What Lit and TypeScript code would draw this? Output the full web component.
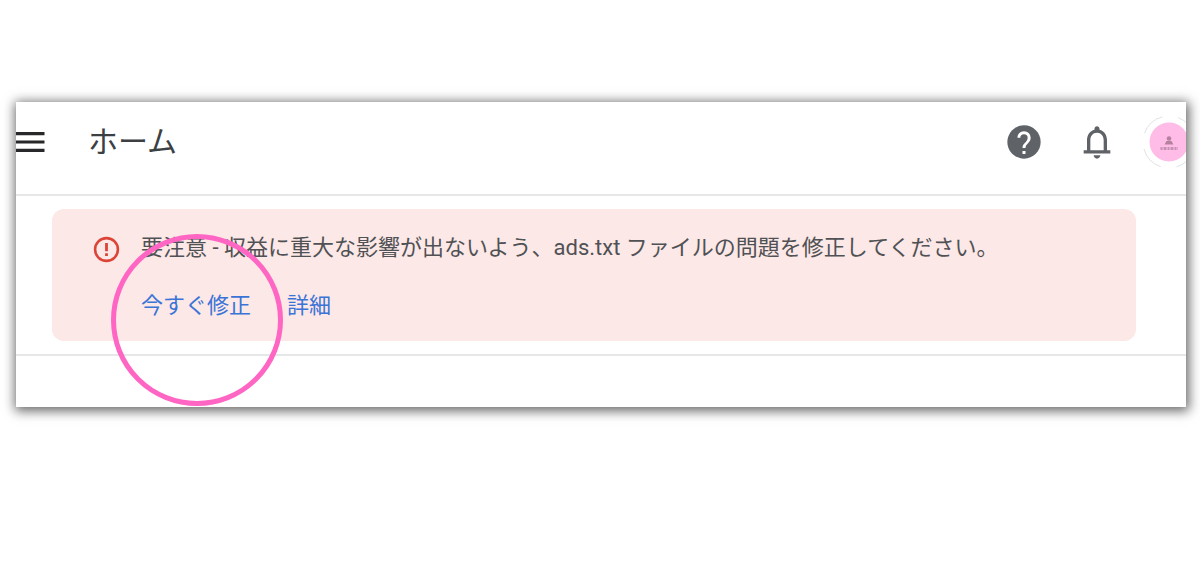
import { LitElement, html, css } from "lit";
import { customElement } from "lit/decorators.js";

@customElement("app-header")
class AppHeader extends LitElement {
  static styles = css`
    :host {
      display: block;
    }
    .bar {
      display: flex;
      align-items: center;
      height: 80px;
      padding-bottom: 12px;
      border-bottom: 2px solid #e6e7e8;
    }
    .icon {
      display: block;
      flex: none;
      padding: 0;
      border: 0;
      background: none;
      color: #5f6368;
      cursor: pointer;
    }
    .menu {
      color: #28282b;
    }
    svg {
      display: block;
    }
    h1 {
      flex: 1;
      margin: 0 0 0 42px;
      font-size: 30px;
      line-height: 40px;
      font-weight: 400;
      color: #3c4043;
    }
    .actions {
      display: flex;
      align-items: center;
      margin-right: -10px;
    }
    .help {
      margin-right: 33px;
    }
    .bell {
      margin-right: 25px;
    }
  `;

  render() {
    return html`
      <header class="bar">
        <button class="icon menu" aria-label="メニュー">
          <svg width="30" height="24" viewBox="0 0 30 24">
            <path d="M0 3.7H28.5M0 12H28.5M0 20.3H28.5" stroke="currentColor" stroke-width="3.2" />
          </svg>
        </button>
        <h1>ホーム</h1>
        <div class="actions">
          <button class="icon help" aria-label="ヘルプ">
            <svg width="40" height="40" viewBox="0 0 24 24">
              <path
                fill="currentColor"
                d="M12 2C6.48 2 2 6.48 2 12s4.480 10 10 10 10-4.480 10-10S17.520 2 12 2z"
              />
              <path
                fill="#fff"
                d="M11.100 17.400h1.800v1.800h-1.800zM11.100 15.600c0-3.100 3.100-3.300 3.100-6.100a2.200 2.200 0 0 0-4.400 0H8a4 4 0 0 1 8 0c0 3.100-3.100 3.500-3.100 6.100z"
              />
            </svg>
          </button>
          <button class="icon bell" aria-label="通知">
            <svg width="40" height="40" viewBox="0 0 24 24">
              <path
                fill="currentColor"
                d="M18 17v-6c0-3.070-1.630-5.640-4.500-6.320V4c0-.830-.670-1.500-1.500-1.500s-1.500.670-1.500 1.500v.680C7.640 5.360 6 7.920 6 11v6H4v1.900h16V17h-2zm-2 0H8v-6c0-2.480 1.510-4.500 4-4.500s4 2.020 4 4.500v6zm-4 5c1.100 0 2-.9 2-2h-4c0 1.100.9 2 2 2z"
              />
            </svg>
          </button>
          <button class="icon" aria-label="アカウント">
            <svg width="54" height="54" viewBox="0 0 54 54">
              <circle cx="27" cy="27" r="26" fill="none" stroke="#dfe3e5" stroke-dasharray="25 16" stroke-dashoffset="-8" />
              <circle cx="27" cy="27" r="19.500" fill="#ffbce6" />
              <g fill="#b5819f">
                <circle cx="27" cy="23.500" r="2.300" />
                <path d="M22.500 29.500l2-3.500h5l2 3.500z" />
              </g>
              <path d="M18.500 33.500H36" stroke="#c791b3" stroke-width="3" stroke-dasharray="2 1 3 1" />
            </svg>
          </button>
        </div>
      </header>
    `;
  }
}

@customElement("alert-banner")
class AlertBanner extends LitElement {
  static styles = css`
    :host {
      display: block;
    }
    .banner {
      display: flex;
      align-items: flex-start;
      gap: 20px;
      padding: 24px 40px 20px;
      border-radius: 12px;
      background: #fce8e6;
      font-size: 22px;
      line-height: 30px;
      color: #505155;
    }
    svg {
      display: block;
      flex: none;
      margin-top: 2px;
    }
    p {
      margin: 0;
    }
    .links {
      display: flex;
      gap: 36px;
      margin-top: 28px;
    }
    a {
      color: #3b74d7;
      text-decoration: none;
    }
  `;

  render() {
    return html`
      <section class="banner" role="alert">
        <svg width="29" height="29" viewBox="0 0 29 29">
          <circle cx="14.500" cy="14.500" r="11.400" fill="none" stroke="#dd4438" stroke-width="2.600" />
          <path d="M14.500 8V16.200M14.500 18.300V21" stroke="#dd4438" stroke-width="2.800" />
        </svg>
        <div>
          <p>要注意 - 収益に重大な影響が出ないよう、ads.txt ファイルの問題を修正してください。</p>
          <div class="links">
            <a href="#fix">今すぐ修正</a>
            <a href="#details">詳細</a>
          </div>
        </div>
      </section>
    `;
  }
}

@customElement("app-root")
class AppRoot extends LitElement {
  static styles = css`
    :host {
      display: block;
      font-family: Roboto, "Noto Sans CJK JP", sans-serif;
    }
    .page {
      box-sizing: border-box;
      min-height: 100vh;
      padding: 102px 14px 40px 16px;
      background: #fff;
    }
    .frame {
      position: relative;
      box-shadow: 1px 2px 11px 2px rgba(0, 0, 0, 0.6);
    }
    .window {
      overflow: hidden;
      background: #fff;
    }
    .notice {
      padding: 13px 50px 13px 36px;
      border-bottom: 2px solid #e6e7e8;
    }
    .content {
      height: 51px;
    }
    .marker {
      position: absolute;
      left: 95px;
      top: 132px;
      box-sizing: border-box;
      width: 172px;
      height: 172px;
      border: 5px solid #ff66c4;
      border-radius: 50%;
      pointer-events: none;
    }
  `;

  render() {
    return html`
      <div class="page">
        <div class="frame">
          <div class="window">
            <app-header></app-header>
            <div class="notice"><alert-banner></alert-banner></div>
            <main class="content"></main>
          </div>
          <div class="marker"></div>
        </div>
      </div>
    `;
  }
}
